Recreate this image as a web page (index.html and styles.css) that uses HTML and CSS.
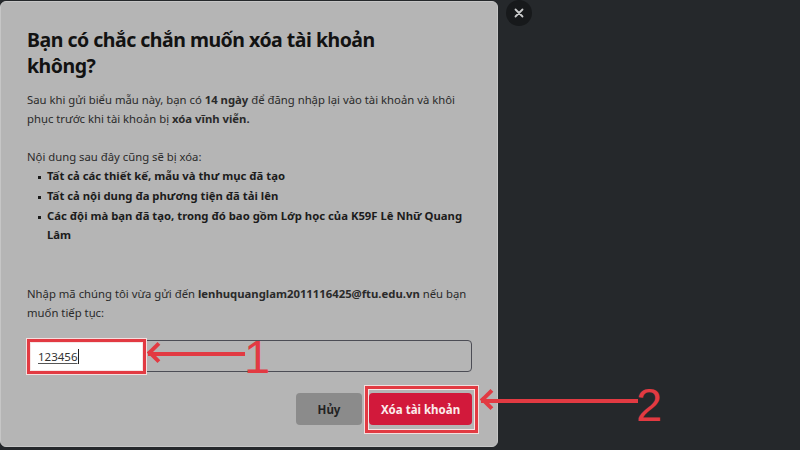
FILE: index.html
```html
<!DOCTYPE html>
<html lang="vi">
<head>
  <meta charset="UTF-8">
  <meta name="viewport" content="width=device-width, initial-scale=1.0">
  <title>Xóa tài khoản</title>
  <link rel="stylesheet" href="styles.css">
</head>
<body>
  <div class="screen">
    <div class="modal">
      <h1>Bạn có chắc chắn muốn xóa tài khoản không?</h1>
      <p class="intro">Sau khi gửi biểu mẫu này, bạn có <b>14 ngày</b> để đăng nhập lại vào tài khoản và khôi phục trước khi tài khoản bị <b>xóa vĩnh viễn.</b></p>

      <p class="list-title">Nội dung sau đây cũng sẽ bị xóa:</p>
      <ul class="lost-list">
        <li>Tất cả các thiết kế, mẫu và thư mục đã tạo</li>
        <li>Tất cả nội dung đa phương tiện đã tải lên</li>
        <li>Các đội mà bạn đã tạo, trong đó bao gồm Lớp học của K59F Lê Nhữ Quang Lâm</li>
      </ul>

      <p class="prompt">Nhập mã chúng tôi vừa gửi đến <b>lenhuquanglam2011116425@ftu.edu.vn</b> nếu bạn muốn tiếp tục:</p>
      <div class="code-field">
        <div class="mark mark-code"><span class="code">123456</span><span class="caret"></span></div>
      </div>

      <div class="actions">
        <button class="btn btn-cancel">Hủy</button>
        <button class="btn btn-delete">Xóa tài khoản</button>
        <div class="mark mark-delete"></div>
      </div>
    </div>

    <button class="close" aria-label="Đóng">
      <svg width="10" height="10" viewBox="0 0 10 10"><path d="M1.5 1.5L8.5 8.5M8.5 1.5L1.5 8.5" stroke="#c9cacb" stroke-width="1.8" stroke-linecap="round"/></svg>
    </button>

    <!-- chú thích -->
    <div class="arrow arrow-one"></div>
    <div class="step step-one">1</div>
    <div class="arrow arrow-two"></div>
    <div class="step step-two">2</div>
  </div>
</body>
</html>
```

FILE: styles.css
```css
body {
  margin: 0;
  background: #25282b;
  font-family: "Noto Sans", "Open Sans", sans-serif;
  color: #2a2a2a;
}
.screen {
  position: relative;
  width: 800px;
  height: 450px;
  overflow: hidden;
}
.modal {
  position: relative;
  margin-top: 1px;
  width: 498px;
  height: 446px;
  box-sizing: border-box;
  padding: 25px 25px 0 26px;
  background: #b5b5b5;
  border: 1px solid #c6c6c6;
  border-radius: 6px;
}
h1 {
  margin: 0;
  font-size: 19.5px;
  line-height: 26px;
  font-weight: 700;
  font-stretch: 75%;
  letter-spacing: -0.5px;
  color: #121212;
  padding-right: 40px;
}
p {
  margin: 0;
  font-size: 11.3px;
  line-height: 19px;
}
.intro {
  margin-top: 11px;
}
.list-title {
  margin-top: 19px;
}
.lost-list {
  margin: 0;
  padding-left: 20px;
  list-style: none;
  font-size: 11.3px;
  line-height: 19px;
  font-weight: 700;
  color: #1c1c1c;
}
.lost-list li {
  position: relative;
  margin-bottom: 1px;
}
.lost-list li::before {
  content: "";
  position: absolute;
  left: -9px;
  top: 10px;
  width: 3px;
  height: 3px;
  background: #1c1c1c;
}
.prompt {
  margin-top: 40px;
}
.code-field {
  position: relative;
  margin-top: 18px;
  height: 32px;
  box-sizing: border-box;
  border: 1px solid #4c4d55;
  border-radius: 4px;
}
.mark {
  position: absolute;
  box-sizing: border-box;
  border: 3px solid #e23a42;
  outline: 1px solid #f4dede;
  box-shadow: inset 0 0 0 1px #f6e6e6;
}
.mark-code {
  left: -1px;
  top: -2px;
  width: 119px;
  height: 35px;
  background: #ffffff;
  display: flex;
  align-items: center;
  padding-left: 8px;
}
.code {
  font-size: 11.5px;
  color: #333;
  text-decoration: underline;
  text-decoration-color: #555;
  text-underline-offset: 2px;
}
.caret {
  width: 1px;
  height: 15px;
  margin-left: 1px;
  background: #222;
}
.actions {
  position: relative;
  margin-top: 21px;
  display: flex;
  justify-content: flex-end;
  gap: 7px;
}
.btn {
  height: 32px;
  border: none;
  border-radius: 4px;
  font-family: inherit;
  font-size: 11.5px;
  font-weight: 700;
  padding: 0;
  white-space: nowrap;
}
.btn-cancel {
  width: 66px;
  background: #8b8b8b;
  color: #222;
}
.btn-delete {
  width: 103px;
  background: #d2193b;
  color: #fbecec;
}
.mark-delete {
  right: -6px;
  top: -7px;
  width: 113px;
  height: 47px;
  background: transparent;
}
.close {
  position: absolute;
  left: 506px;
  top: 0;
  width: 26px;
  height: 26px;
  border: none;
  border-radius: 50%;
  background: #17191b;
  display: flex;
  align-items: center;
  justify-content: center;
  padding: 0;
}
.arrow {
  position: absolute;
  height: 4px;
  background: #e23a42;
}
.arrow::before {
  content: "";
  position: absolute;
  left: 2px;
  top: -7px;
  width: 11px;
  height: 11px;
  border-left: 4px solid #e23a42;
  border-bottom: 4px solid #e23a42;
  transform: rotate(45deg);
}
.arrow-one {
  left: 148px;
  top: 352px;
  width: 97px;
}
.arrow-two {
  left: 481px;
  top: 399px;
  width: 157px;
}
.step {
  position: absolute;
  font-family: "Liberation Sans", Arial, sans-serif;
  font-size: 47px;
  line-height: 1;
  color: #e23a42;
}
.step-one {
  left: 244px;
  top: 333px;
}
.step-two {
  left: 636px;
  top: 381px;
}
```
